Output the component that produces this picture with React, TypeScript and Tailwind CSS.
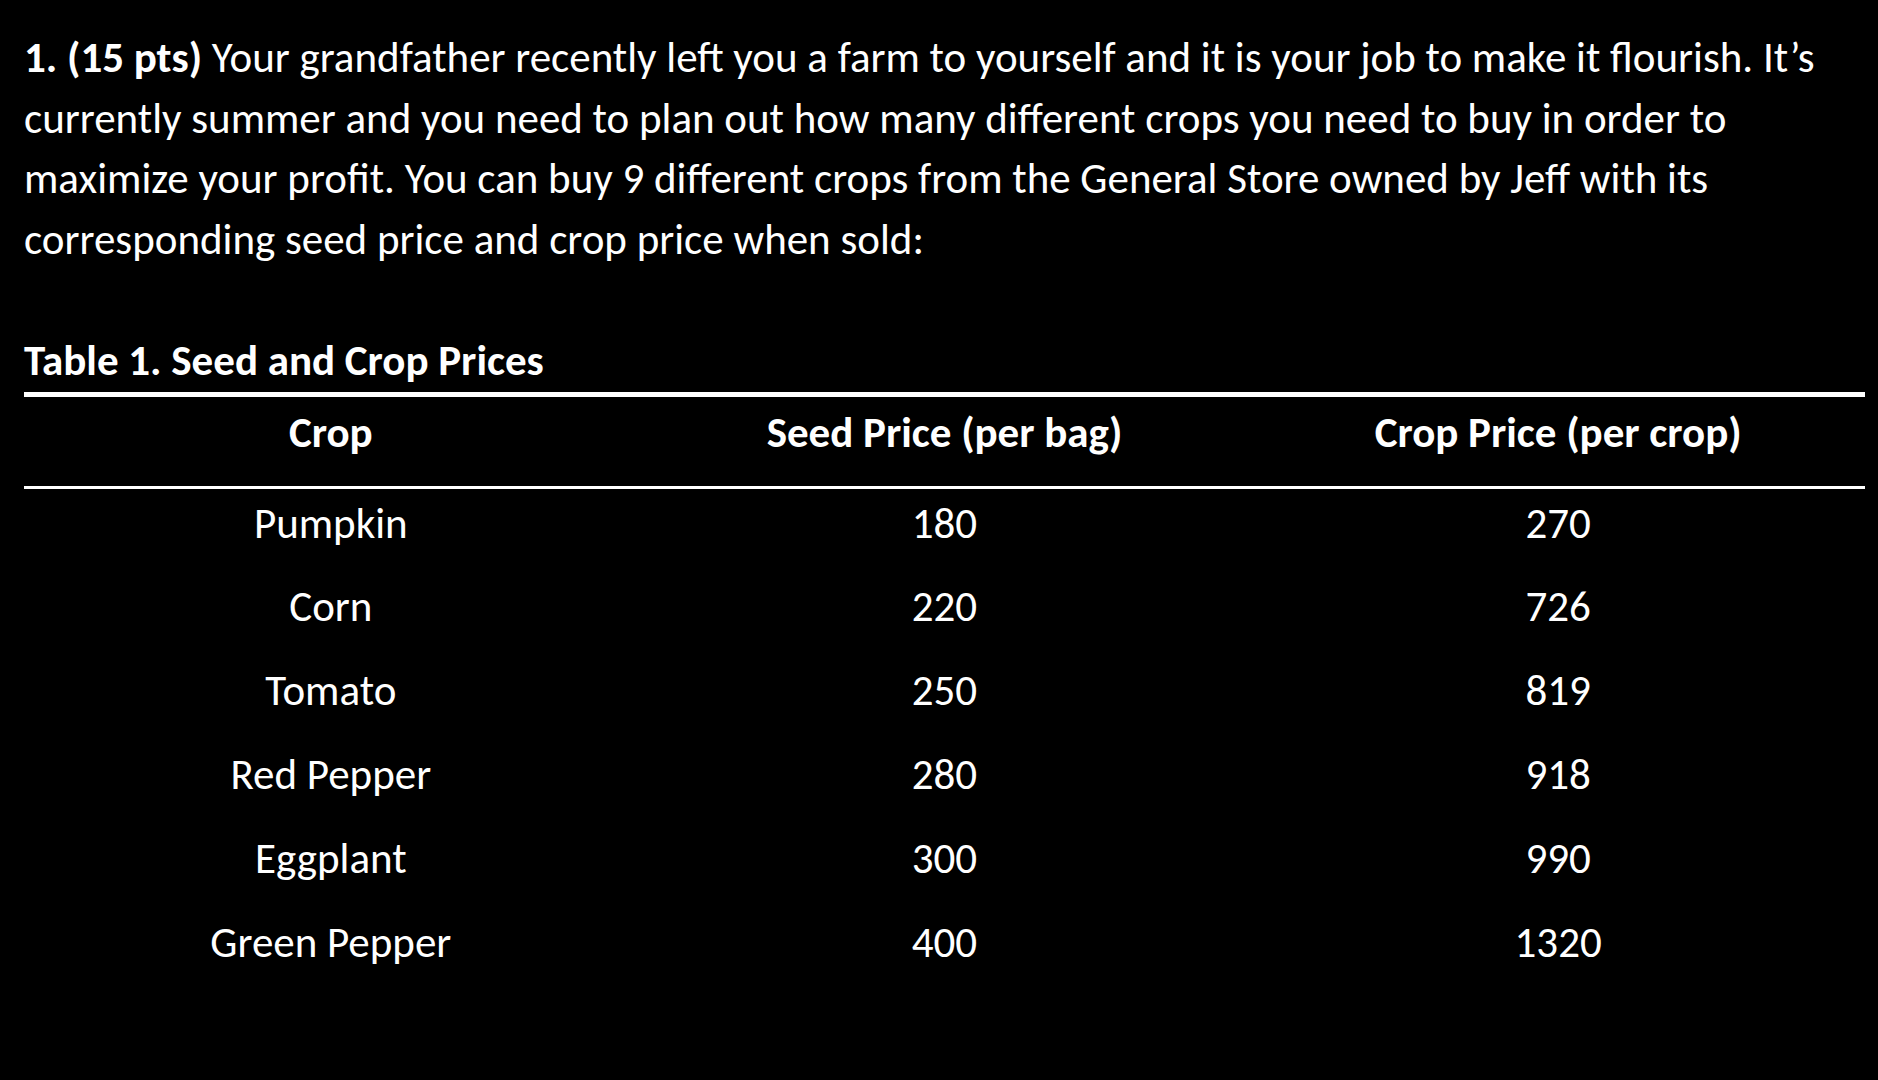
const rows = [
  { crop: 'Pumpkin', seed: '180', price: '270' },
  { crop: 'Corn', seed: '220', price: '726' },
  { crop: 'Tomato', seed: '250', price: '819' },
  { crop: 'Red Pepper', seed: '280', price: '918' },
  { crop: 'Eggplant', seed: '300', price: '990' },
  { crop: 'Green Pepper', seed: '400', price: '1320' },
]

export default function App() {
  return (
    <div className="min-h-screen w-full bg-black text-white font-['Carlito','Lato',sans-serif] pl-[24px] pr-[13px] pt-[28px]">
      <p className="text-[43px] leading-[60.5px] whitespace-nowrap">
        <b>1. (15 pts)</b> Your grandfather recently left you a farm to yourself and it is your job to make it flourish. It’s
        <br />
        currently summer and you need to plan out how many different crops you need to buy in order to
        <br />
        maximize your profit. You can buy 9 different crops from the General Store owned by Jeff with its
        <br />
        corresponding seed price and crop price when sold:
      </p>

      <div className="mt-[66px]">
        <div className="text-[43px] font-bold leading-[50px]">Table 1. Seed and Crop Prices</div>
        <table className="w-full mt-[6px] border-collapse text-[43px]">
          <thead>
            <tr className="border-t-[5px] border-b-[3px] border-white">
              <th className="w-1/3 h-[93px] font-bold text-center align-middle pb-[17px]">Crop</th>
              <th className="w-1/3 h-[93px] font-bold text-center align-middle pb-[17px]">Seed Price (per bag)</th>
              <th className="w-1/3 h-[93px] font-bold text-center align-middle pb-[17px]">Crop Price (per crop)</th>
            </tr>
          </thead>
          <tbody>
            {rows.map((r) => (
              <tr key={r.crop} className="h-[84px]">
                <td className="text-center pb-[12px]">{r.crop}</td>
                <td className="text-center pb-[12px]">{r.seed}</td>
                <td className="text-center pb-[12px]">{r.price}</td>
              </tr>
            ))}
          </tbody>
        </table>
      </div>
    </div>
  )
}
